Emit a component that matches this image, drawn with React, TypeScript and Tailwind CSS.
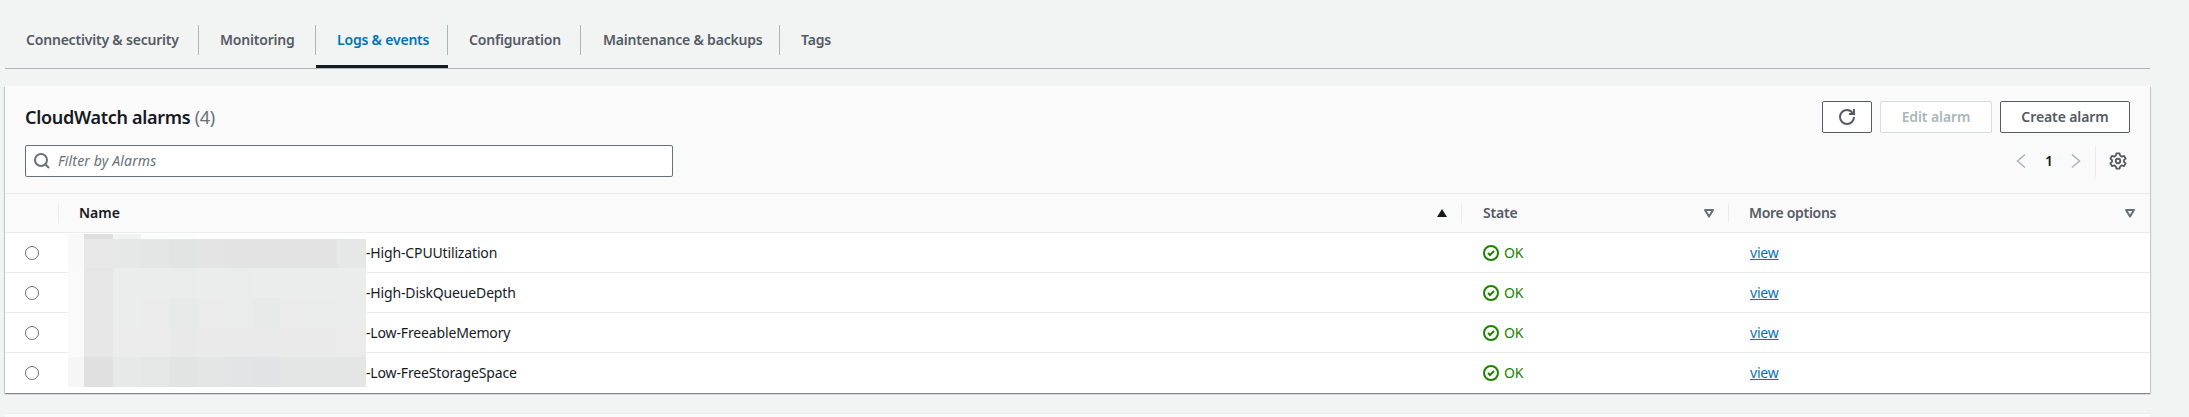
import React from "react";

const tabs = [
  { label: "Connectivity & security", w: "w-[194px]", pad: "pl-[21px]" },
  { label: "Monitoring", w: "w-[117px]", pad: "pl-[21px]" },
  { label: "Logs & events", w: "w-[132px]", active: true, pad: "pl-[21px]" },
  { label: "Configuration", w: "w-[133px]", pad: "pl-[21px]" },
  { label: "Maintenance & backups", w: "w-[199px]", pad: "pl-[22px]" },
  { label: "Tags", w: "w-[80px]", last: true, pad: "pl-[21px]" },
];

const alarms = ["-High-CPUUtilization", "-High-DiskQueueDepth", "-Low-FreeableMemory", "-Low-FreeStorageSpace"];

const mosaic = [
  ["#f8f8f8", "#dedede", "#f2f2f2", "#fbfbfb", "#fcfcfc", "#fdfdfd", "#fdfdfd", "#fdfdfd", "#fdfdfd", "#fdfdfd", "#fdfdfd"],
  ["#f9f9f9", "#e8e8e8", "#e6e7e7", "#e4e5e5", "#e2e3e3", "#e4e4e4", "#e3e3e3", "#e3e3e3", "#e3e3e3", "#e3e3e3", "#e6e8e8"],
  ["#fafafa", "#e6e6e6", "#ebecec", "#ebecec", "#eaebeb", "#ebecec", "#eaebeb", "#ebecec", "#ebecec", "#ebecec", "#ebecec"],
  ["#fafafa", "#e6e6e6", "#ebecec", "#ebebeb", "#e8e9e9", "#ebebeb", "#eaebeb", "#e8e9e9", "#ebebeb", "#eaebeb", "#ebecec"],
  ["#fafafa", "#e7e7e7", "#ececec", "#ececec", "#e9e9e9", "#eaeaea", "#eaeaea", "#eaeaea", "#eaeaea", "#eaeaea", "#ebebeb"],
  ["#f6f6f6", "#e0e0e0", "#e7e9e9", "#e5e6e6", "#e2e4e4", "#e4e5e5", "#e3e4e5", "#e2e3e5", "#e4e5e5", "#e4e5e5", "#e4e5e5"],
];

function Ic({ children, cls = "", size = 16 }: { children: React.ReactNode; cls?: string; size?: number }) {
  return (
    <svg width={size} height={size} viewBox="0 0 16 16" fill="none" stroke="currentColor" strokeWidth={2} className={cls}>
      {children}
    </svg>
  );
}

function FilterCaret() {
  return (
    <svg width="12" height="12" viewBox="0 0 12 12" fill="none">
      <path d="M2 3h8L6 9.6z" stroke="#687078" strokeWidth="2" strokeLinejoin="round" />
    </svg>
  );
}

export default function App() {
  return (
    <div className="relative h-[417px] w-full overflow-hidden bg-[#f2f3f3] pl-[5px] pr-[39px] pt-[25px] font-['Noto_Sans',sans-serif] text-[14px] leading-[20px] text-[#16191f]">
      <div className="flex h-[44px] border-b border-[#aab7b8]">
        {tabs.map((t) => (
          <div key={t.label} className={`${t.w} h-[43px] border-b-[3px] ${t.active ? "border-[#16191f] text-[#0073bb]" : "border-transparent text-[#545b64]"}`}>
            <div className={`flex h-[30px] items-center ${t.pad} text-[14px] font-semibold tracking-[-0.2px] whitespace-nowrap ${t.last ? "" : "border-r border-[#aab7b8]"}`}>
              {t.label}
            </div>
          </div>
        ))}
      </div>

      <div className="relative mt-[17px] h-[307px] bg-white shadow-[0_1px_1px_0_rgba(0,28,36,0.3),1px_1px_1px_0_rgba(0,28,36,0.15),-1px_1px_1px_0_rgba(0,28,36,0.15)]">
        <div className="h-[108px] border-b border-[#eaeded] bg-[#fafafa] px-[20px] pt-[15px]">
          <div className="flex h-[32px] items-center justify-between">
            <h2 className="-mt-[1px] text-[18px] font-semibold tracking-[-0.3px] text-[#16191f]">
              CloudWatch alarms <span className="font-normal text-[#687078]">(4)</span>
            </h2>
            <div className="flex gap-[8px]">
              <button className="flex h-[32px] w-[50px] items-center justify-center rounded-[2px] border border-[#545b64] bg-white text-[#545b64]">
                <Ic>
                  <path d="M10 5h5V0" />
                  <path d="M15 8a6.99 6.99 0 0 1-7 7 6.99 6.99 0 0 1-7-7 6.99 6.99 0 0 1 7-7c2.36 0 4.44 1.17 5.71 2.97" />
                </Ic>
              </button>
              <button className="h-[32px] w-[112px] rounded-[2px] border border-[#d5dbdb] bg-white text-[14px] font-semibold tracking-[-0.1px] text-[#aab7b8]">Edit alarm</button>
              <button className="h-[32px] w-[130px] rounded-[2px] border border-[#545b64] bg-white text-[14px] font-semibold tracking-[-0.1px] text-[#545b64]">Create alarm</button>
            </div>
          </div>
          <div className="mt-[12px] flex h-[32px] items-center justify-between">
            <div className="flex h-[32px] w-[648px] items-center gap-[8px] rounded-[2px] border border-[#687078] bg-white pl-[8px] text-[#687078]">
              <Ic>
                <circle cx="7" cy="7" r="6" />
                <path d="M11 11l4 4" />
              </Ic>
              <span className="italic tracking-[0.15px]">Filter by Alarms</span>
            </div>
            <div className="flex h-[32px] items-center">
              <Ic cls="text-[#aab7b8]"><path d="M12 1.500 4.500 8l7.500 6.500" strokeWidth="1.6" /></Ic>
              <span className="ml-[16px] w-[8px] text-center text-[14px] font-semibold text-[#16191f]">1</span>
              <Ic cls="ml-[15px] text-[#aab7b8]"><path d="M4 1.500 11.500 8 4 14.500" strokeWidth="1.6" /></Ic>
              <div className="ml-[11px] flex h-[32px] w-[35px] items-center border-l border-[#eaeded] pl-[13px] text-[#545b64]">
                <Ic size={18}>
                  <path d="M6.6 1.2h2.8l.5 2 1.5.9 2-.6 1.4 2.4-1.5 1.4v1.4l1.5 1.4-1.4 2.4-2-.6-1.5.9-.5 2H6.6l-.5-2-1.5-.9-2 .6-1.4-2.4L2.700 8.700V7.300L1.200 5.900l1.400-2.400 2 .6 1.500-.9z" strokeWidth="1.6" strokeLinejoin="round" />
                  <circle cx="8" cy="8" r="2" strokeWidth="1.6" />
                </Ic>
              </div>
            </div>
          </div>
        </div>

        <div className="grid h-[39px] grid-cols-[54px_1403px_267px_421px] items-center border-b border-[#eaeded] bg-[#fafafa] font-semibold">
          <div className="flex h-[20px] border-r border-[#eaeded]" />
          <div className="flex h-[20px] items-center justify-between border-r border-[#eaeded] pl-[20px] pr-[13px]">
            <span>Name</span>
            <svg width="12" height="12" viewBox="0 0 12 12" fill="#16191f"><path d="M6 2 11 10H1z" /></svg>
          </div>
          <div className="flex h-[20px] items-center justify-between border-r border-[#eaeded] pl-[21px] pr-[13px] text-[#545b64]">
            <span className="tracking-[-0.2px]">State</span>
            <FilterCaret />
          </div>
          <div className="flex h-[20px] items-center justify-between pl-[20px] pr-[14px] text-[#545b64]">
            <span className="tracking-[-0.3px]">More options</span>
            <FilterCaret />
          </div>
        </div>

        {alarms.map((a, i) => (
          <div key={a} className={`grid h-[40px] grid-cols-[54px_1403px_267px_421px] items-center bg-white ${i < 3 ? "border-b border-[#eaeded]" : ""}`}>
            <div className="pl-[20px]">
              <div className="h-[14px] w-[14px] rounded-full border border-[#687078] bg-white" />
            </div>
            <div className="pl-[307px] tracking-[-0.15px]">{a}</div>
            <div className="flex items-center gap-[5px] pl-[21px] text-[#1d8102]">
              <Ic><circle cx="8" cy="8" r="7" /><path d="M5 8l2 2 4-4" /></Ic>
              <span className="tracking-[-0.2px]">OK</span>
            </div>
            <div className="pl-[21px]">
              <a className="tracking-[-0.2px] text-[#0073bb] underline">view</a>
            </div>
          </div>
        ))}

        <div className="absolute left-[63px] top-[148px] grid h-[153px] w-[298px] grid-cols-[16px_29px_28px_28px_28px_28px_28px_27px_28px_29px_29px] grid-rows-[5px_29px_30px_30px_29px_30px]">
          {mosaic.flatMap((row, r) =>
            row.map((c, k) => <div key={`${r}-${k}`} style={{ backgroundColor: c }} />)
          )}
        </div>
      </div>

      <div className="mt-[20px] h-[10px] border-t border-[#eaeded] bg-[#fafafa]" />
    </div>
  );
}
